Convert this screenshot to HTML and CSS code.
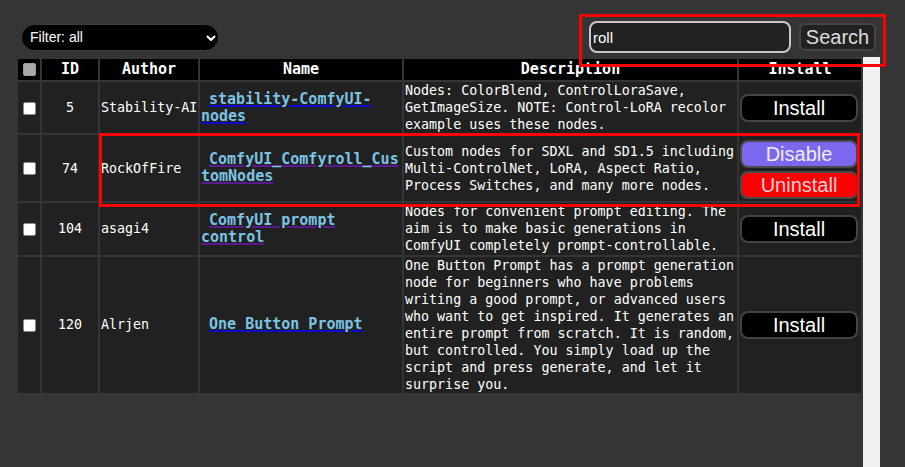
FILE: index.html
```html
<!DOCTYPE html>
<html>
<head>
<meta charset="utf-8">
<title>Custom Nodes</title>
<link rel="stylesheet" href="styles.css">
</head>
<body>
<div class="topbar">
  <div class="select-wrap">
    <select class="filter">
      <option>Filter: all</option>
    </select>
    <svg class="chev" width="10" height="7" viewBox="0 0 10 7"><path d="M1.5 1.5 L5 5 L8.5 1.5" fill="none" stroke="#fff" stroke-width="2" stroke-linecap="round" stroke-linejoin="round"/></svg>
  </div>
  <div class="search">
    <input class="search-input" type="text" value="roll">
    <button class="search-btn">Search</button>
  </div>
</div>
<div class="main">
  <table class="nodes">
    <colgroup>
      <col class="c-check"><col class="c-id"><col class="c-author"><col class="c-name"><col class="c-desc"><col class="c-install">
    </colgroup>
    <thead>
      <tr>
        <th><input type="checkbox" class="cb cb-head"></th>
        <th>ID</th>
        <th>Author</th>
        <th>Name</th>
        <th>Description</th>
        <th>Install</th>
      </tr>
    </thead>
    <tbody>
      <tr>
        <td class="t-check"><input type="checkbox" class="cb"></td>
        <td class="t-id">5</td>
        <td class="t-author">Stability-AI</td>
        <td class="t-name">&nbsp;<a href="#" class="lnk">stability-ComfyUI-nodes</a></td>
        <td class="t-desc">Nodes: ColorBlend, ControlLoraSave, GetImageSize. NOTE: Control-LoRA recolor example uses these nodes.</td>
        <td class="t-install"><button class="btn btn-install">Install</button></td>
      </tr>
      <tr>
        <td class="t-check"><input type="checkbox" class="cb"></td>
        <td class="t-id">74</td>
        <td class="t-author">RockOfFire</td>
        <td class="t-name">&nbsp;<a href="#" class="lnk visited">ComfyUI_Comfyroll_CustomNodes</a></td>
        <td class="t-desc">Custom nodes for SDXL and SD1.5 including Multi-ControlNet, LoRA, Aspect Ratio, Process Switches, and many more nodes.</td>
        <td class="t-install">
          <div class="btn-stack">
            <button class="btn btn-disable">Disable</button>
            <button class="btn btn-uninstall">Uninstall</button>
          </div>
        </td>
      </tr>
      <tr>
        <td class="t-check"><input type="checkbox" class="cb"></td>
        <td class="t-id">104</td>
        <td class="t-author">asagi4</td>
        <td class="t-name">&nbsp;<a href="#" class="lnk visited">ComfyUI prompt control</a></td>
        <td class="t-desc">Nodes for convenient prompt editing. The aim is to make basic generations in ComfyUI completely prompt-controllable.</td>
        <td class="t-install"><button class="btn btn-install">Install</button></td>
      </tr>
      <tr>
        <td class="t-check"><input type="checkbox" class="cb"></td>
        <td class="t-id">120</td>
        <td class="t-author">Alrjen</td>
        <td class="t-name">&nbsp;<a href="#" class="lnk">One Button Prompt</a></td>
        <td class="t-desc">One Button Prompt has a prompt generation node for beginners who have problems writing a good prompt, or advanced users who want to get inspired. It generates an entire prompt from scratch. It is random, but controlled. You simply load up the script and press generate, and let it surprise you.</td>
        <td class="t-install"><button class="btn btn-install">Install</button></td>
      </tr>
    </tbody>
  </table>
  <div class="track"></div>
</div>
<div class="mark mark-search"></div>
<div class="mark mark-row"></div>
</body>
</html>
```
FILE: styles.css
```css
* { box-sizing: border-box; }
html, body { margin: 0; padding: 0; }
body {
  background: #353535;
  width: 905px;
  height: 467px;
  overflow: hidden;
  position: relative;
  font-family: "DejaVu Sans Mono", "Liberation Mono", monospace;
  color: #fff;
}
.topbar {
  display: flex;
  justify-content: space-between;
  align-items: center;
  height: 57px;
  padding: 21px 29px 4px 21px;
}
.select-wrap {
  position: relative;
  width: 198px;
  height: 27px;
}
.filter {
  appearance: none;
  -webkit-appearance: none;
  width: 198px;
  height: 27px;
  background: #000;
  color: #fff;
  border: 1px solid #3c3c3c;
  border-radius: 14px;
  padding: 0 0 0 8px;
  font-family: "Liberation Sans", Arial, sans-serif;
  font-size: 14px;
  outline: none;
}
.chev {
  position: absolute;
  left: 185px;
  top: 11px;
  pointer-events: none;
}
.search {
  display: flex;
  align-items: center;
  gap: 8px;
}
.search-input {
  width: 202px;
  height: 32px;
  background: #222;
  color: #fff;
  border: 2px solid #c8c8c8;
  border-radius: 8px;
  padding: 0 2px;
  font-family: "Liberation Sans", Arial, sans-serif;
  font-size: 15px;
  outline: none;
}
.search-btn {
  width: 77px;
  height: 28px;
  background: #222;
  color: #ddd;
  border: 2px solid #444;
  border-radius: 6px;
  padding: 0;
  font-family: "Liberation Sans", Arial, sans-serif;
  font-size: 20px;
  line-height: 24px;
}
.main {
  display: flex;
  align-items: flex-start;
  padding-left: 16px;
  height: 410px;
}
.nodes {
  table-layout: fixed;
  border-collapse: separate;
  border-spacing: 2px;
  width: 847px;
  flex: none;
}
.c-check { width: 22px; }
.c-id { width: 56px; }
.c-author { width: 98px; }
.c-name { width: 202px; }
.c-desc { width: 333px; }
.c-install { width: 122px; }
.nodes th {
  background: #000;
  color: #fff;
  height: 21px;
  padding: 0;
  font-size: 15px;
  font-weight: bold;
  line-height: 21px;
  text-align: center;
  vertical-align: middle;
}
.nodes td {
  background: #212121;
  padding: 0 1px;
  font-size: 13.33px;
  line-height: 17.1px;
  vertical-align: middle;
}
.t-check, .t-id { text-align: center; }
.t-check, .nodes th:first-child { padding: 0; line-height: 0; }
.t-author { white-space: nowrap; overflow: hidden; }
.t-name { overflow-wrap: anywhere; }
.t-desc { padding: 0 1px; }
.cb {
  appearance: none;
  -webkit-appearance: none;
  width: 13px;
  height: 13px;
  margin: 0;
  background: #fff;
  border: 1px solid #8a8a8a;
  border-radius: 2px;
  vertical-align: middle;
}
.cb-head { background: #a9a9a9; border-color: #9a9a9a; }
.lnk {
  color: #7cc3e4;
  font-size: 15px;
  font-weight: bold;
  text-decoration: underline;
  text-decoration-color: #0a0ad0;
  text-decoration-thickness: 2px;
  text-underline-offset: 1px;
}
.lnk.visited { text-decoration-color: #5a1a8e; }
.t-install { padding: 0 2px; }
.btn {
  display: block;
  width: 118px;
  height: 28px;
  margin: 0;
  padding: 0;
  border: 2px solid #444;
  border-radius: 8px;
  font-family: "Liberation Sans", Arial, sans-serif;
  font-size: 20px;
  line-height: 24px;
  text-align: center;
}
.btn-install { background: #000; color: #fff; }
.btn-stack {
  display: flex;
  flex-direction: column;
  gap: 3px;
  padding: 5px 0 2px;
}
.btn-disable { background: #7b68ee; color: #eee; border-color: #4a4a4a; }
.btn-uninstall { background: #ff0000; color: #f3d0d8; border-color: #4a4a4a; }
.track {
  width: 17px;
  height: 410px;
  background: #f1f1f1;
  flex: none;
}
.mark {
  position: absolute;
  border: 3px solid #ff0000;
  pointer-events: none;
}
.mark-search { left: 579px; top: 14px; width: 307px; height: 53px; }
.mark-row { left: 99px; top: 133px; width: 761px; height: 74px; }
```
